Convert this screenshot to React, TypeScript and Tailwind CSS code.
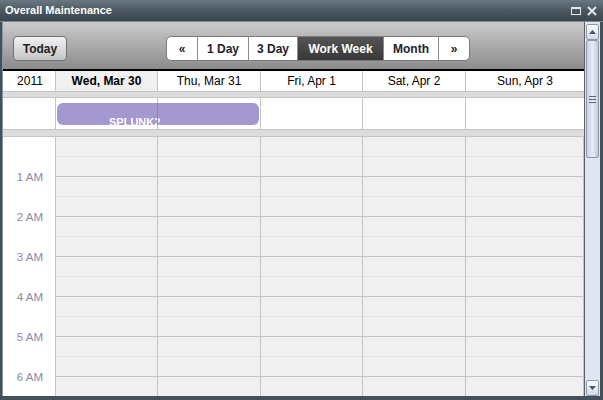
import React from 'react';

const days = ['Wed, Mar 30', 'Thu, Mar 31', 'Fri, Apr 1', 'Sat, Apr 2', 'Sun, Apr 3'];
const views = [
  { label: '«', w: 'w-[30px]' },
  { label: '1 Day', w: 'w-[51px]' },
  { label: '3 Day', w: 'w-[49px]' },
  { label: 'Work Week', w: 'w-[86px]', active: true },
  { label: 'Month', w: 'w-[55px]' },
  { label: '»', w: 'w-[31px]' },
];
const hours = Array.from({ length: 7 }, (_, i) => i);

function OuterScrollbar() {
  return (
    <div className="w-[16px] border-l border-[#55616b] bg-[#dfe5f1] flex flex-col pt-[2px] relative">
      <div className="mx-[1px] h-[16px] rounded-[2px] border border-[#8d97a6] bg-linear-to-b from-[#fbfcfe] to-[#d3dae6] flex items-center justify-center">
        <svg width="7" height="4" viewBox="0 0 7 4"><path d="M0 4 L3.5 0 L7 4 Z" fill="#4b5563" /></svg>
      </div>
      <div className="mx-[1px] h-[118px] rounded-[2px] border border-[#8d97a6] bg-linear-to-r from-[#c9d1df] via-[#e8ecf4] to-[#c3cbda] flex flex-col items-center justify-center gap-[2px]">
        <div className="w-[7px] h-[1px] bg-[#5b6674]" />
        <div className="w-[7px] h-[1px] bg-[#5b6674]" />
        <div className="w-[7px] h-[1px] bg-[#5b6674]" />
      </div>
      <div className="flex-1" />
      <div className="mx-[1px] h-[16px] rounded-[2px] border border-[#8d97a6] bg-linear-to-b from-[#fbfcfe] to-[#d3dae6] flex items-center justify-center">
        <svg width="7" height="4" viewBox="0 0 7 4"><path d="M0 0 L3.5 4 L7 0 Z" fill="#4b5563" /></svg>
      </div>
    </div>
  );
}

export default function App() {
  return (
    <div
      className="w-[603px] h-[400px] flex flex-col bg-[#45515a] overflow-hidden text-[12px]"
      style={{ fontFamily: '"Liberation Sans", Arial, sans-serif' }}
    >
      {/* title bar */}
      <div className="h-[22px] flex items-center justify-between px-[5px] bg-linear-to-b from-[#6a7883] via-[#4b5862] to-[#3a464e] border-b border-[#7b8791]">
        <span className="text-white font-bold text-[11px]">Overall Maintenance</span>
        <div className="flex items-center gap-[6px] pr-[1px]">
          <div className="w-[10px] h-[8px] border border-[#e3e8ee] border-t-2" />
          <svg width="10" height="10" viewBox="0 0 10 10">
            <path d="M1 1 L9 9 M9 1 L1 9" stroke="#e3e8ee" strokeWidth="2" />
          </svg>
        </div>
      </div>

      <div className="flex-1 flex min-h-0">
        <div className="w-[3px] bg-[#45515a] border-r border-[#8a949c]" />
        <div className="flex-1 flex flex-col min-w-0 bg-white">
          {/* toolbar */}
          <div className="h-[49px] shrink-0 flex items-center pl-[10px] pt-[6px] bg-linear-to-b from-[#cbcbcb] to-[#8c8c8c] border-b-2 border-black">
            <button className="w-[54px] h-[25px] rounded-[4px] border border-[#707070] bg-linear-to-b from-[#f2f2f2] to-[#c4c4c4] font-bold text-[#222]">
              Today
            </button>
            <div className="ml-[99px] flex h-[25px] rounded-[5px] border border-[#7a7a7a] bg-white overflow-hidden">
              {views.map((v, i) => (
                <div
                  key={v.label}
                  className={`${v.w} flex items-center justify-center font-bold ${i > 0 ? 'border-l border-[#8a8a8a]' : ''} ${
                    v.active ? 'bg-linear-to-b from-[#555] to-[#383838] text-white' : 'text-[#1c2230]'
                  }`}
                >
                  {v.label}
                </div>
              ))}
            </div>
          </div>

          {/* header */}
          <div className="h-[21px] shrink-0 grid grid-cols-[53px_102px_103px_102px_103px_1fr] border-b border-[#c4c4c4]">
            <div className="flex items-center justify-center border-r border-[#c4c4c4] pl-[2px]">2011</div>
            {days.map((d, i) => (
              <div
                key={d}
                className={`flex items-center justify-center ${i < 4 ? 'border-r border-[#c4c4c4]' : ''} ${
                  i === 0 ? 'bg-[#f0f0f0] font-bold' : ''
                }`}
              >
                {d}
              </div>
            ))}
          </div>

          {/* all-day */}
          <div className="h-[6px] shrink-0 bg-[#dcdcdc] border-b border-[#c4c4c4]" />
          <div className="h-[31px] shrink-0 grid grid-cols-[53px_102px_103px_102px_103px_1fr] relative">
            {[0, 1, 2, 3, 4, 5].map((c) => (
              <div key={c} className={c < 5 ? 'border-r border-[#c4c4c4]' : ''} />
            ))}
            <div className="absolute left-[54px] top-[5px] w-[202px] h-[22px] rounded-[6px] bg-[#a597cf] overflow-hidden">
              <div className="pl-[52px] pt-[13px] leading-[12px] text-[11px] font-bold text-white">SPLUNK2</div>
              <div className="absolute left-[100px] top-0 h-full w-[1px] bg-[#8f81bb]" />
            </div>
          </div>
          <div className="h-[8px] shrink-0 bg-[#dcdcdc] border-y border-[#c4c4c4]" />

          {/* body */}
          <div className="flex-1 min-h-0 grid grid-cols-[53px_102px_103px_102px_103px_1fr] overflow-hidden">
            <div className="border-r border-[#c4c4c4] bg-white">
              {hours.map((h) => (
                <div key={h} className="h-[40px] relative">
                  {h > 0 && (
                    <span className="absolute right-[12px] -top-[6px] leading-[12px] text-[11.5px] text-[#8a8aa0]">
                      {h} AM
                    </span>
                  )}
                </div>
              ))}
            </div>
            {[0, 1, 2, 3, 4].map((c) => (
              <div key={c} className="border-r border-[#c4c4c4] bg-[#f0f0f0]">
                {hours.map((h) => (
                  <div key={h}>
                    <div className="h-[20px] border-b border-[#e2e2e2]" />
                    <div className="h-[20px] border-b border-[#c4c4c4]" />
                  </div>
                ))}
              </div>
            ))}
            <div className="bg-[#ececec] border-l border-[#f6f6f6] flex justify-center pt-[7px]">
              <svg width="9" height="5" viewBox="0 0 9 5"><path d="M0 5 L4.5 0 L9 5 Z" fill="#777" /></svg>
            </div>
          </div>
        </div>
        <OuterScrollbar />
        <div className="w-[3px] bg-[#45515a]" />
      </div>
      <div className="h-[4px] bg-[#45515a]" />
    </div>
  );
}
